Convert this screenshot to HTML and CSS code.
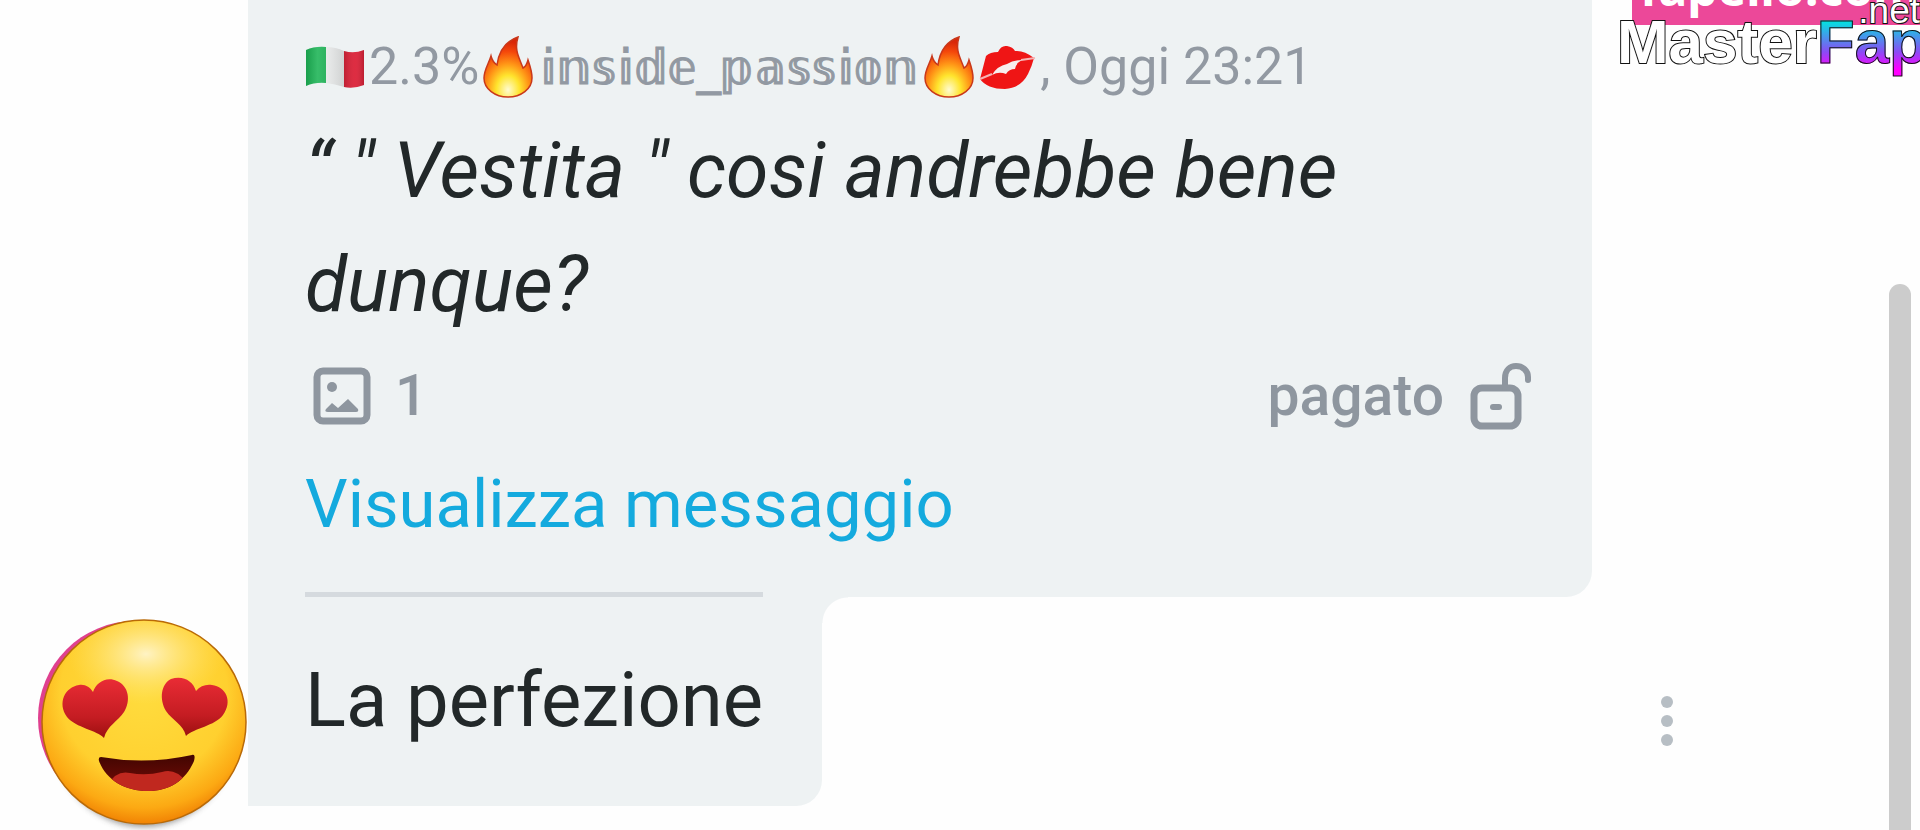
FILE: index.html
```html
<!DOCTYPE html>
<html lang="it">
<head>
    <meta charset="UTF-8">
    <meta name="viewport" content="width=device-width, initial-scale=1.0">
    <title>Messaggi</title>
    <link rel="stylesheet" href="styles.css">
</head>
<body>
    <svg class="defs" aria-hidden="true">
        <defs>
            <radialGradient id="flameFill" cx="0.5" cy="0.88" r="0.8">
                <stop offset="0" stop-color="#fffbd0"/>
                <stop offset="0.3" stop-color="#ffe52e"/>
                <stop offset="0.55" stop-color="#ff9416"/>
                <stop offset="0.8" stop-color="#f4470b"/>
                <stop offset="1" stop-color="#d92708"/>
            </radialGradient>
            <symbol id="flame" viewBox="0 0 50 62">
                <path d="M35 1C23 5 16 14 14 29C11 27 9 24 8 20C6 27 1 34 1 42C1 53 12 61 25 61C38 61 49 53 49 42C49 35 47 30 45 24C44 28 42 31 40 32C36 21 31 14 35 1Z" fill="url(#flameFill)" stroke="#c9381a" stroke-width="1.5"/>
            </symbol>
        </defs>
    </svg>

    <main class="chat">
        <div class="avatar">
            <svg viewBox="0 0 212 216" role="img" aria-label="Faccina con occhi a cuore">
                <defs>
                    <radialGradient id="face" cx="0.5" cy="0.36" r="0.66">
                        <stop offset="0" stop-color="#ffdc3e"/>
                        <stop offset="0.62" stop-color="#ffd02f"/>
                        <stop offset="0.85" stop-color="#fca913"/>
                        <stop offset="1" stop-color="#ee7900"/>
                    </radialGradient>
                    <radialGradient id="shine">
                        <stop offset="0" stop-color="#fff3c4"/>
                        <stop offset="1" stop-color="#ffe36a" stop-opacity="0"/>
                    </radialGradient>
                    <linearGradient id="heart" x1="0" y1="0" x2="0" y2="1">
                        <stop offset="0" stop-color="#e92c35"/>
                        <stop offset="0.65" stop-color="#c41c22"/>
                        <stop offset="1" stop-color="#9c1010"/>
                    </linearGradient>
                    <linearGradient id="mouth" x1="0" y1="0" x2="0" y2="1">
                        <stop offset="0" stop-color="#3a0500"/>
                        <stop offset="1" stop-color="#7c0c08"/>
                    </linearGradient>
                    <clipPath id="mouthClip">
                        <path d="M65 143Q110 151 156 141C159 140 159 143 158 147C150 166 134 177 112 177C89 177 70 166 63 147Q62 143 65 143Z"/>
                    </clipPath>
                    <clipPath id="faceClip"><circle cx="108" cy="108" r="101"/></clipPath>
                    <filter id="soft"><feGaussianBlur stdDeviation="3"/></filter>
                </defs>
                <ellipse cx="108" cy="114" rx="92" ry="99" fill="#555" opacity="0.6" filter="url(#soft)"/>
                <circle cx="99" cy="104" r="97" fill="#e0408f"/>
                <circle cx="108" cy="108" r="102" fill="url(#face)" stroke="#b96a08" stroke-width="1.5"/>
                <ellipse cx="110" cy="40" rx="78" ry="50" fill="url(#shine)" clip-path="url(#faceClip)"/>
                <path d="M68 124C61 116 40 114 31 103C21 89 29 73 43 71C49 70 54 73 57 78C60 69 70 62 81 67C93 72 95 87 88 98C82 107 71 112 68 124Z" fill="url(#heart)"/>
                <path d="M150 122C158 114 179 112 187 101C197 87 190 73 176 71C170 70 164 72 160 77C157 67 147 61 135 65C125 70 123 85 130 97C136 106 147 110 150 122Z" fill="url(#heart)"/>
                <g clip-path="url(#mouthClip)">
                    <rect x="58" y="136" width="106" height="44" fill="url(#mouth)"/>
                    <path d="M72 171Q80 156 94 159Q110 162 126 158Q140 154 150 168L140 182H76Z" fill="#c0281f"/>
                </g>
            </svg>
        </div>

        <div class="thread">
            <article class="quote">
                <header class="quote-head">
                    <svg class="emoji flag" viewBox="0 0 60 42" role="img" aria-label="Italia">
                        <defs>
                            <linearGradient id="cloth">
                                <stop offset="0" stop-color="#000" stop-opacity="0.12"/>
                                <stop offset="0.2" stop-color="#fff" stop-opacity="0.12"/>
                                <stop offset="0.65" stop-color="#000" stop-opacity="0.14"/>
                                <stop offset="0.85" stop-color="#fff" stop-opacity="0.05"/>
                                <stop offset="1" stop-color="#000" stop-opacity="0.15"/>
                            </linearGradient>
                        </defs>
                        <path d="M1 4Q10 0 21 1V37Q10 36 1 40Z" fill="#1cb455"/>
                        <path d="M21 1Q31 1 39 5V41Q30 38 21 37Z" fill="#f3f5f5"/>
                        <path d="M39 5Q49 8 59 4V39Q49 43 39 41Z" fill="#dc2238"/>
                        <path d="M1 4Q10 0 21 1Q31 1 39 5Q49 8 59 4V39Q49 43 39 41Q30 38 21 37Q10 36 1 40Z" fill="url(#cloth)"/>
                    </svg>
                    <span>2.3%</span>
                    <svg class="emoji fire" role="img" aria-label="Fuoco"><use href="#flame"/></svg>
                    <span class="outlined">𝕚𝕟𝕤𝕚𝕕𝕖_𝕡𝕒𝕤𝕤𝕚𝕠𝕟</span>
                    <svg class="emoji fire" role="img" aria-label="Fuoco"><use href="#flame"/></svg>
                    <svg class="emoji kiss" viewBox="0 0 58 46" role="img" aria-label="Bacio">
                        <path d="M2 35L8 12Q12 8 20 8Q23 1 29 2Q35 3 37 7Q46 6 56 14Q54 22 50 30Q43 44 27 45Q9 45 2 35Z" fill="#ef1515"/>
                        <path d="M14 31Q19 22 29 20Q35 16 44 16Q38 19 37 25Q31 25 28 30Q21 27 14 31Z" fill="#f7eeee"/>
                        <path d="M2 35L14 30M43 16L57 14" stroke="#f6b4b4" stroke-width="2" fill="none"/>
                    </svg>
                    <span>, Oggi 23:21</span>
                </header>
                <p class="quote-text">“ " Vestita " cosi andrebbe bene dunque?</p>
                <div class="quote-meta">
                    <span class="media">
                        <svg class="icon-image" viewBox="0 0 58 58" aria-hidden="true">
                            <rect x="4" y="4" width="50" height="50" rx="6" fill="none" stroke="currentColor" stroke-width="7"/>
                            <circle cx="19" cy="20" r="5" fill="currentColor"/>
                            <path d="M13 42L19 36L25 41L35 32L45 42Q46 45 43 45H15Q11 45 13 42Z" fill="currentColor"/>
                        </svg>
                        1
                    </span>
                    <span class="paid">
                        pagato
                        <svg class="icon-lock" viewBox="0 0 62 68" aria-hidden="true">
                            <rect x="4" y="26" width="44" height="38" rx="8" fill="none" stroke="currentColor" stroke-width="7"/>
                            <path d="M35 25V16C35 8 40 4 46 4C53 4 58 9 58 15V18" fill="none" stroke="currentColor" stroke-width="6" stroke-linecap="round"/>
                            <path d="M23 45H29" stroke="currentColor" stroke-width="6" stroke-linecap="round"/>
                        </svg>
                    </span>
                </div>
                <a class="quote-link" href="#">Visualizza messaggio</a>
            </article>
            <div class="reply-row">
                <div class="reply">
                    <p class="reply-text">La perfezione</p>
                </div>
                <button class="more" type="button" aria-label="Altro">
                    <svg viewBox="0 0 14 52" aria-hidden="true">
                        <circle cx="7" cy="7" r="6"/>
                        <circle cx="7" cy="26" r="6"/>
                        <circle cx="7" cy="45" r="6"/>
                    </svg>
                </button>
            </div>
        </div>
    </main>

    <div class="scroll-thumb"></div>

    <div class="ribbon">fapello.com</div>
    <div class="logo">Master<span class="logo-accent">Fap</span></div>
    <div class="logo-suffix">.net</div>
</body>
</html>
```
FILE: styles.css
```css
* {
    box-sizing: border-box;
}
body {
    margin: 0;
    min-height: 100vh;
    background: #fefefe;
    color: #222829;
    font-family: Roboto, "Liberation Sans", sans-serif;
    overflow: hidden;
    position: relative;
}
p {
    margin: 0;
}
.defs {
    position: absolute;
    width: 0;
    height: 0;
}

/* Chat */
.chat {
    display: flex;
    align-items: flex-end;
    height: 100vh;
}
.avatar {
    flex: 0 0 248px;
    padding-left: 36px;
}
.avatar svg {
    display: block;
    width: 212px;
    height: 216px;
}
.thread {
    flex: 1;
    align-self: flex-start;
}
.quote {
    width: 70vw;
    padding: 27px 60px 43px 57px;
    background: #eef2f3;
    border-radius: 0 0 26px 0;
}
.quote-head {
    display: flex;
    align-items: center;
    gap: 4px;
    height: 80px;
    font-size: 52px;
    line-height: 80px;
    color: #9299a2;
    white-space: nowrap;
}
.emoji {
    flex: none;
}
.flag {
    width: 60px;
    height: 42px;
}
.fire {
    width: 50px;
    height: 62px;
}
.kiss {
    width: 58px;
    height: 46px;
}
.outlined {
    padding: 0 2px;
    font-family: "DejaVu Sans", sans-serif;
    font-size: 48px;
    -webkit-text-stroke: 1px #9299a2;
}
.quote-text {
    margin-top: 7px;
    font-size: 77px;
    font-style: italic;
    line-height: 114px;
}
.quote-meta {
    display: flex;
    justify-content: space-between;
    margin-top: 14px;
    font-size: 57px;
    font-weight: 500;
    line-height: 80px;
    color: #8e969f;
}
.media,
.paid {
    display: flex;
    align-items: center;
    gap: 26px;
}
.media {
    gap: 24px;
    padding-left: 8px;
}
.icon-image {
    width: 58px;
    height: 58px;
}
.icon-lock {
    width: 62px;
    height: 68px;
}
.quote-link {
    display: block;
    margin-top: 18px;
    font-size: 67px;
    line-height: 100px;
    color: #14aade;
    text-decoration: none;
}
.reply-row {
    display: flex;
    justify-content: space-between;
    width: 75vw;
    margin-top: -5px;
}
.reply {
    position: relative;
    padding: 0 59px 49px 57px;
    background: #eef2f3;
    border-radius: 0 0 26px 0;
}
/* concave corner between the two bubbles */
.reply::after {
    content: "";
    position: absolute;
    top: 5px;
    left: 100%;
    width: 26px;
    height: 26px;
    background: radial-gradient(circle at 100% 100%, transparent 25px, #eef2f3 26px);
}
.reply-text {
    padding-top: 46px;
    border-top: 5px solid #d5dade;
    font-size: 76px;
    line-height: 114px;
}
.more {
    align-self: center;
    margin-top: 44px;
    padding: 0 14px;
    border: none;
    background: none;
    cursor: pointer;
}
.more svg {
    display: block;
    width: 14px;
    height: 52px;
    fill: #b7bec4;
}
.scroll-thumb {
    position: absolute;
    top: 284px;
    right: 9px;
    bottom: -20px;
    width: 22px;
    border-radius: 11px;
    background: #cccccc;
}

/* Corner marks */
.ribbon {
    position: absolute;
    top: -12px;
    right: 0;
    width: 15vw;
    height: 37px;
    padding-left: 8px;
    overflow: hidden;
    background: #ec4899;
    color: #fff;
    font-family: "Noto Sans", "Open Sans", sans-serif;
    font-size: 48px;
    font-weight: 700;
    line-height: 0;
    white-space: nowrap;
}
.logo {
    position: absolute;
    top: 5px;
    right: -7px;
    color: #fff;
    font-family: "Liberation Sans", Arial, sans-serif;
    font-size: 62px;
    font-weight: 700;
    line-height: 74px;
    -webkit-text-stroke: 2px #111;
    paint-order: stroke fill;
}
.logo-accent {
    background: linear-gradient(#00e5e0 20%, #8a4cf5 65%, #ff00ff 90%);
    -webkit-background-clip: text;
    background-clip: text;
    color: transparent;
    -webkit-text-stroke: 1px #111;
}
.logo-suffix {
    position: absolute;
    top: -10px;
    right: 0;
    color: #fff;
    font-family: "Liberation Sans", Arial, sans-serif;
    font-size: 37px;
    line-height: 42px;
    -webkit-text-stroke: 2px #111;
    paint-order: stroke fill;
}
```
